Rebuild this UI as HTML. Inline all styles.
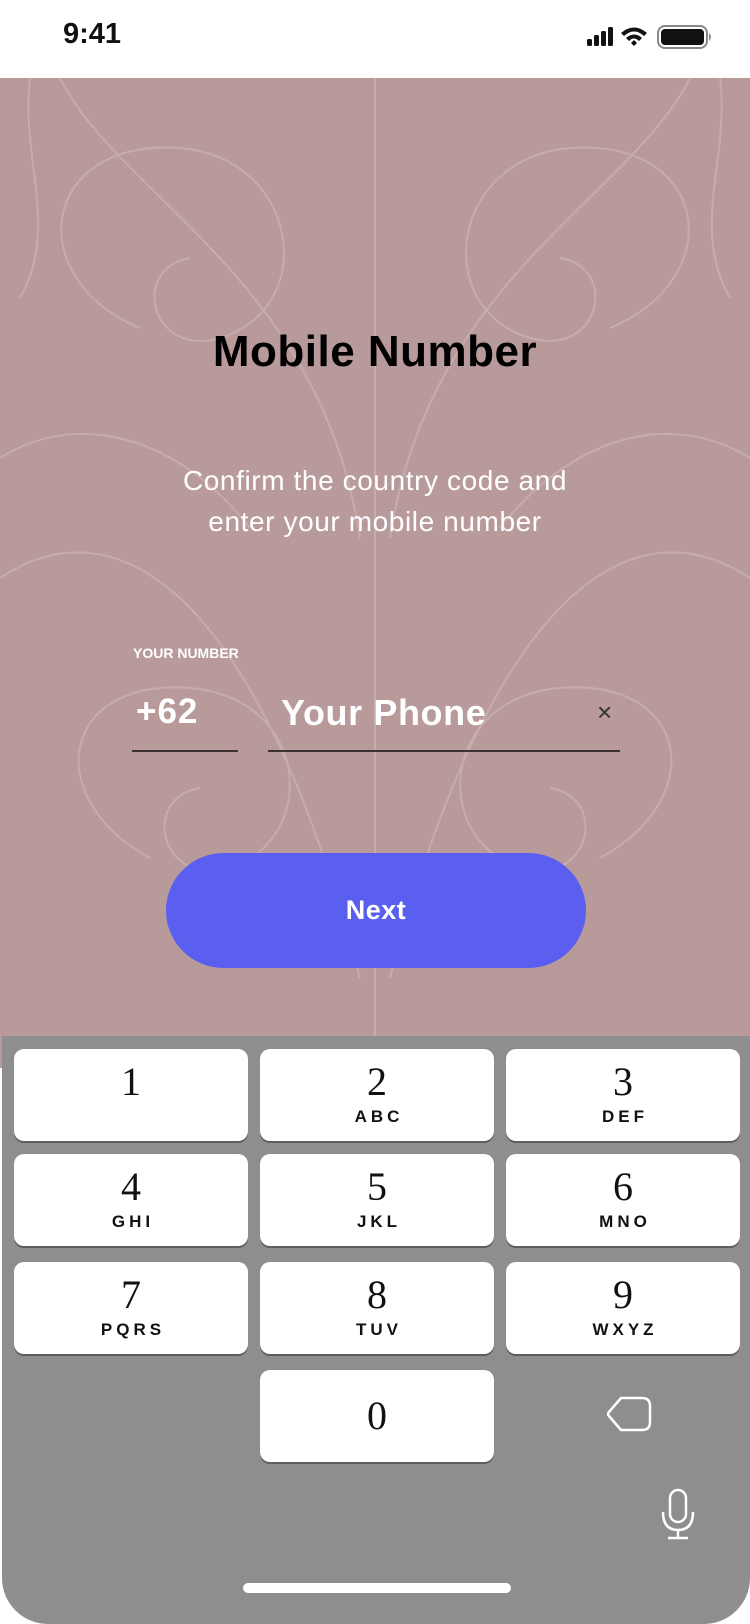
<!DOCTYPE html>
<html><head><meta charset="utf-8"><style>
*{margin:0;padding:0;box-sizing:border-box}
body{width:750px;height:1624px;position:relative;background:#fff;overflow:hidden;font-family:"Liberation Sans",sans-serif}
.abs{position:absolute}
.bg{left:0;top:78px;width:750px;height:990px;background:#b89a9b}
.kb{left:2px;top:1036px;width:748px;height:588px;background:#8e8e8e;border-radius:0 0 46px 46px}
.key{position:absolute;width:234px;height:92px;background:#fff;border-radius:10px;box-shadow:0 2px 0 #5e5e5e;text-align:center}
.key .d{font-family:"Liberation Serif",serif;font-size:40px;line-height:38px;margin-top:14px;color:#111}
.key .l{font-weight:bold;font-size:17px;letter-spacing:4px;margin-top:6px;padding-left:4px;color:#111}
</style></head><body>
<div class="abs" style="left:63px;top:18px;font-size:29px;font-weight:bold;color:#111">9:41</div>
<svg class="abs" style="left:585px;top:22px" width="140" height="30" viewBox="0 0 140 30">
<rect x="2" y="17" width="5" height="7" rx="1.5" fill="#111"/><rect x="9" y="13" width="5" height="11" rx="1.5" fill="#111"/><rect x="16" y="9" width="5" height="15" rx="1.5" fill="#111"/><rect x="23" y="5" width="5" height="19" rx="1.5" fill="#111"/>
<path d="M36 11 Q49 0 62 11 L59 14 Q49 5 39 14Z M41 16 Q49 9 57 16 L54 19 Q49 14 44 19Z M46 21 L49 18 L52 21 L49 24Z" fill="#111"/>
<rect x="73" y="4" width="49" height="22" rx="7" fill="none" stroke="#888" stroke-width="2"/><rect x="76" y="7" width="43" height="16" rx="4" fill="#111"/><path d="M124 11 Q128 15 124 19" fill="#888"/>
</svg>
<div class="abs bg"></div>
<svg class="abs" style="left:0;top:78px" width="750" height="958" fill="none" stroke="#d4bcbd" stroke-width="2" opacity="0.55">
<path d="M375 0 V958"/>
<path d="M140 250 C20 200 40 60 180 70 C300 80 320 230 220 260 C150 280 130 190 190 180"/>
<path d="M610 250 C730 200 710 60 570 70 C450 80 430 230 530 260 C600 280 620 190 560 180"/>
<path d="M150 780 C40 720 60 600 190 610 C310 620 320 760 230 790 C160 810 140 720 200 710"/>
<path d="M600 780 C710 720 690 600 560 610 C440 620 430 760 520 790 C590 810 610 720 550 710"/>
<path d="M60 0 C120 120 320 200 360 460 M690 0 C630 120 430 200 390 460 M0 500 C120 420 260 520 360 900 M750 500 C630 420 490 520 390 900"/>
<path d="M0 380 C80 330 180 360 250 450 M750 380 C670 330 570 360 500 450 M30 0 C20 80 60 150 20 220 M720 0 C730 80 690 150 730 220"/>
</svg>
<div class="abs" style="left:0;width:750px;top:327px;text-align:center;font-size:44px;letter-spacing:0.5px;font-weight:bold;color:#000">Mobile Number</div>
<div class="abs" style="left:0;width:750px;top:460px;text-align:center;font-size:28px;letter-spacing:0.6px;line-height:41px;color:#fff">Confirm the country code and<br>enter your mobile number</div>
<div class="abs" style="left:133px;top:645px;font-size:14px;font-weight:bold;color:#fff">YOUR NUMBER</div>
<div class="abs" style="left:136px;top:692px;font-size:35px;letter-spacing:1px;font-weight:bold;color:#fff">+62</div>
<div class="abs" style="left:281px;top:692px;font-size:36px;letter-spacing:0.6px;font-weight:bold;color:#fff">Your Phone</div>
<div class="abs" style="left:597px;top:697px;font-size:26px;color:#333">×</div>
<div class="abs" style="left:132px;top:750px;width:106px;height:2px;background:#3a3233"></div>
<div class="abs" style="left:268px;top:750px;width:352px;height:2px;background:#3a3233"></div>
<div class="abs" style="left:166px;top:853px;width:420px;height:115px;border-radius:58px;background:#5b5ff0;color:#fff;font-weight:bold;font-size:27px;letter-spacing:0.5px;text-align:center;line-height:115px">Next</div>
<div class="abs kb">
<div class="key" style="left:12px;top:13px"><div class="d">1</div></div>
<div class="key" style="left:258px;top:13px"><div class="d">2</div><div class="l">ABC</div></div>
<div class="key" style="left:504px;top:13px"><div class="d">3</div><div class="l">DEF</div></div>
<div class="key" style="left:12px;top:118px"><div class="d">4</div><div class="l">GHI</div></div>
<div class="key" style="left:258px;top:118px"><div class="d">5</div><div class="l">JKL</div></div>
<div class="key" style="left:504px;top:118px"><div class="d">6</div><div class="l">MNO</div></div>
<div class="key" style="left:12px;top:226px"><div class="d">7</div><div class="l">PQRS</div></div>
<div class="key" style="left:258px;top:226px"><div class="d">8</div><div class="l">TUV</div></div>
<div class="key" style="left:504px;top:226px"><div class="d">9</div><div class="l">WXYZ</div></div>
<div class="key" style="left:258px;top:334px"><div class="d" style="margin-top:27px">0</div></div>
<svg class="abs" style="left:602px;top:358px" width="50" height="40" viewBox="0 0 50 40"><path d="M17 4 H38 Q46 4 46 12 V28 Q46 36 38 36 H17 L5 22 Q3 20 5 18Z" fill="none" stroke="#fff" stroke-width="2.5" stroke-linejoin="round"/></svg>
<svg class="abs" style="left:656px;top:452px" width="40" height="54" viewBox="0 0 40 54"><rect x="12" y="2" width="16" height="32" rx="8" fill="none" stroke="#fff" stroke-width="2.5"/><path d="M5 24 Q5 42 20 42 Q35 42 35 24 M20 42 V50 M10 50 H30" fill="none" stroke="#fff" stroke-width="2.5"/></svg>
<div class="abs" style="left:241px;top:547px;width:268px;height:10px;border-radius:5px;background:#fff"></div>
</div>
</body></html>
